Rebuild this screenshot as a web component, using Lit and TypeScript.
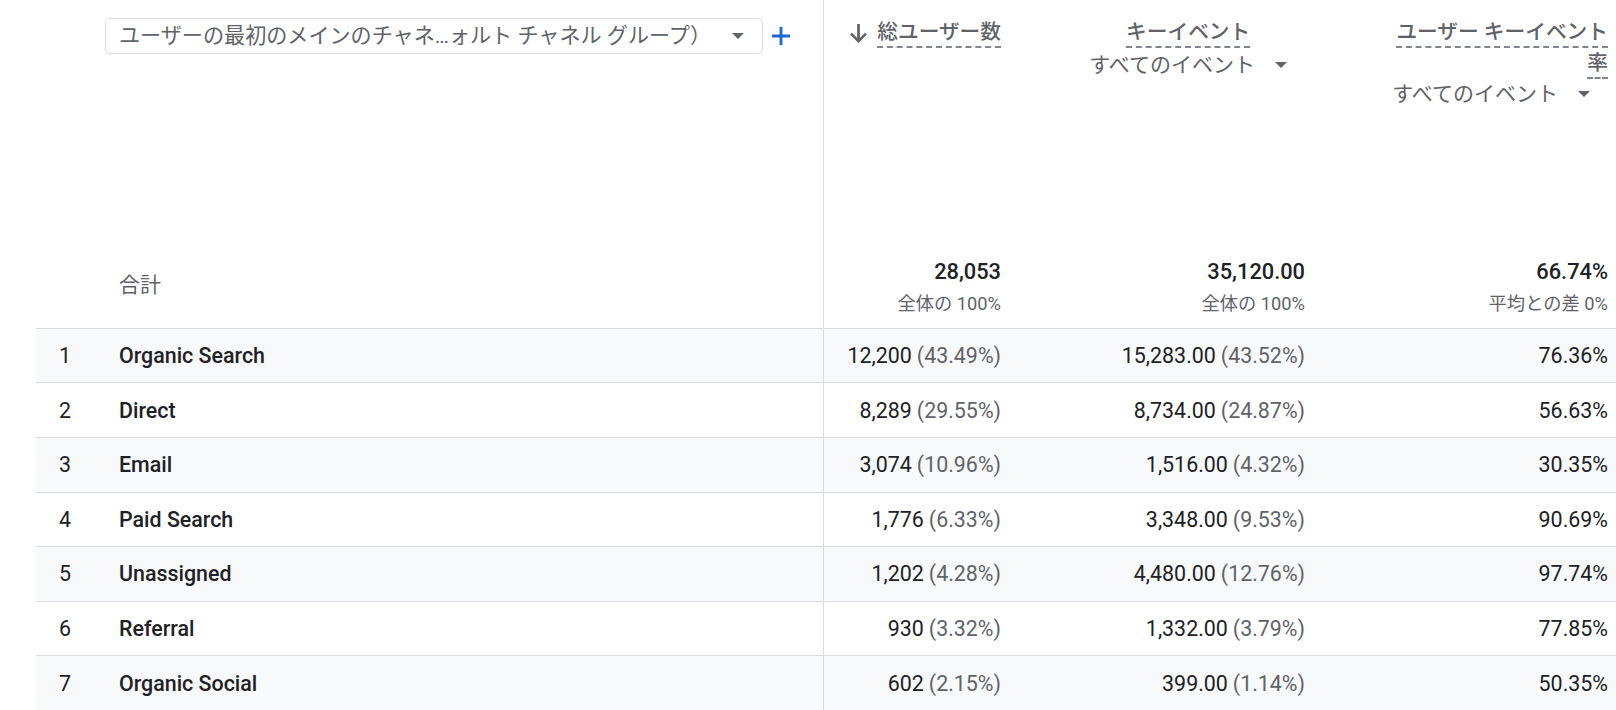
import { LitElement, html, css } from "lit";
import { customElement } from "lit/decorators.js";

const rows = [
  ["1", "Organic Search", "12,200", "(43.49%)", "15,283.00", "(43.52%)", "76.36%"],
  ["2", "Direct", "8,289", "(29.55%)", "8,734.00", "(24.87%)", "56.63%"],
  ["3", "Email", "3,074", "(10.96%)", "1,516.00", "(4.32%)", "30.35%"],
  ["4", "Paid Search", "1,776", "(6.33%)", "3,348.00", "(9.53%)", "90.69%"],
  ["5", "Unassigned", "1,202", "(4.28%)", "4,480.00", "(12.76%)", "97.74%"],
  ["6", "Referral", "930", "(3.32%)", "1,332.00", "(3.79%)", "77.85%"],
  ["7", "Organic Social", "602", "(2.15%)", "399.00", "(1.14%)", "50.35%"],
];

const caret = html`<svg class="caret" width="12" height="6" viewBox="0 0 12 6"><path d="M0 0h12L6 6z" fill="#5f6368"></path></svg>`;

@customElement("app-root")
export class AppRoot extends LitElement {
  static styles = css`
    :host {
      display: block;
      width: 1616px;
      height: 710px;
      overflow: hidden;
      background: #fff;
      font-family: Roboto, "Noto Sans CJK JP", sans-serif;
      color: #202124;
      font-size: 21.4px;
    }
    .row {
      display: grid;
      grid-template-columns: 83px 704px 186px 304px 303px;
      margin-left: 36px;
    }
    .divider { border-left: 1px solid #dadce0; }
    .num {
      display: flex;
      flex-direction: column;
      align-items: flex-end;
      padding-right: 8px;
      text-align: right;
    }
    .head { height: 247.8px; }
    .select-cell { display: flex; align-items: flex-start; gap: 9px; padding-top: 18px; }
    .select {
      box-sizing: border-box;
      width: 658px;
      height: 36px;
      margin-left: -14px;
      flex: none;
      border: 1px solid #dadce0;
      border-radius: 5px;
      display: flex;
      align-items: center;
      justify-content: space-between;
      padding: 0 18px 0 13px;
      color: #5f6368;
      font-size: 21.1px;
      white-space: nowrap;
    }
    .select span { padding-bottom: 4px; }
    .plus { display: block; margin-top: 9px; flex: none; }
    .label {
      font-weight: 500;
      color: #5f6368;
      font-size: 20.7px;
      line-height: 27px;
      padding-top: 1px;
      border-bottom: 2px dashed #80868b;
      text-align: right;
      white-space: nowrap;
    }
    .label + .label { margin-top: 1px; }
    .h1 { padding-top: 18px; }
    .h1 .titlewrap { display: flex; align-items: center; gap: 8px; }
    .arrow { margin-left: -2px; }
    .group { display: flex; flex-direction: column; align-items: center; margin-right: 18px; }
    .sub-select {
      display: flex;
      align-items: center;
      gap: 20px;
      color: #5f6368;
      font-size: 21px;
      line-height: 30px;
      white-space: nowrap;
    }
    .group .sub-select { margin-top: 2px; }
    .end { margin-right: 18px; }
    .total { height: 80px; align-items: stretch; }
    .total .name { color: #5f6368; align-self: center; font-size: 21px; padding-bottom: 10px; }
    .total .num { justify-content: center; gap: 8px; }
    .total .big { font-weight: 500; font-size: 21.8px; color: #202124; line-height: 24px; }
    .total .small { color: #5f6368; font-size: 18.3px; line-height: 24px; white-space: nowrap; }
    .data { height: 54.6px; box-sizing: border-box; border-top: 1px solid #dadce0; align-items: stretch; }
    .data.odd { background: #f8f9fa; }
    .data > div { display: flex; align-items: center; }
    .data .idx { padding-left: 23px; }
    .data .name { font-weight: 500; }
    .data .num { flex-direction: row; justify-content: flex-end; gap: 5px; }
    .pct { color: #5f6368; }
  `;

  render() {
    return html`
      <div class="row head">
        <div></div>
        <div class="select-cell">
          <div class="select">
            <span>ユーザーの最初のメインのチャネ…ォルト チャネル グループ）</span>${caret}
          </div>
          <svg class="plus" width="18" height="18" viewBox="0 0 18 18"><path d="M7.6 0h2.8v7.6H18v2.8h-7.6V18H7.6v-7.6H0V7.6h7.6z" fill="#1a67d2"></path></svg>
        </div>
        <div class="divider num h1">
          <div class="titlewrap">
            <svg class="arrow" width="21" height="21" viewBox="0 0 20 20"><path d="M8.7 1h2.6v13.2l5-5L18 11l-8 8-8-8 1.7-1.8 5 5z" fill="#5f6368"></path></svg>
            <span class="label">総ユーザー数</span>
          </div>
        </div>
        <div class="num h1">
          <div class="group">
            <span class="label">キーイベント</span>
            <div class="sub-select"><span>すべてのイベント</span>${caret}</div>
          </div>
        </div>
        <div class="num h1">
          <span class="label">ユーザー キーイベント</span>
          <span class="label">率</span>
          <div class="sub-select end"><span>すべてのイベント</span>${caret}</div>
        </div>
      </div>
      <div class="row total">
        <div></div>
        <div class="name">合計</div>
        <div class="divider num"><span class="big">28,053</span><span class="small">全体の 100%</span></div>
        <div class="num"><span class="big">35,120.00</span><span class="small">全体の 100%</span></div>
        <div class="num"><span class="big">66.74%</span><span class="small">平均との差 0%</span></div>
      </div>
      ${rows.map(
        (r, i) => html`
          <div class="row data ${i % 2 === 0 ? "odd" : ""}">
            <div class="idx">${r[0]}</div>
            <div class="name">${r[1]}</div>
            <div class="divider num"><span>${r[2]}</span><span class="pct">${r[3]}</span></div>
            <div class="num"><span>${r[4]}</span><span class="pct">${r[5]}</span></div>
            <div class="num"><span>${r[6]}</span></div>
          </div>
        `
      )}
    `;
  }
}
